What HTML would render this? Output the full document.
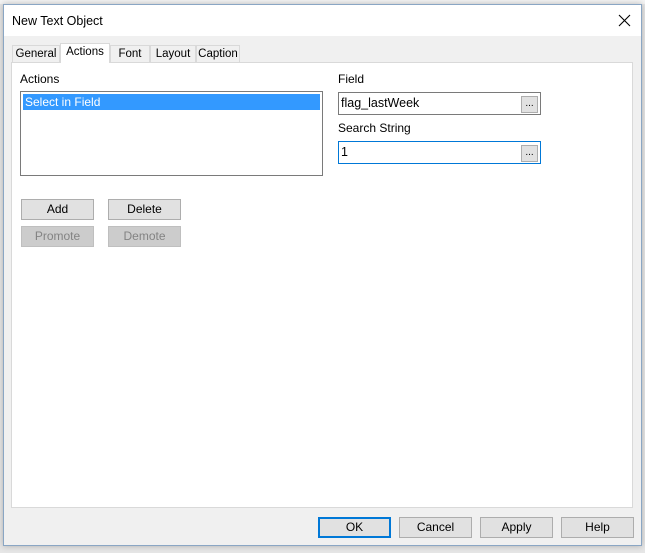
<!DOCTYPE html>
<html><head><style>
*{margin:0;padding:0;box-sizing:border-box}
body{width:645px;height:553px;background:#e6e6e6;font-family:"Liberation Sans",Arial,sans-serif;font-size:12px;color:#000;position:relative;overflow:hidden}
.a{position:absolute}
.win{left:3px;top:4px;width:639px;height:542px;background:#f0f0f0;border:1px solid #8aa6c4;box-shadow:0 0 6px rgba(0,0,0,.25)}
.title{left:0;top:0;width:637px;height:31px;background:#fff}
.tab{top:40px;height:18px;border:1px solid #d9d9d9;border-bottom:none;background:#f0f0f0;text-align:center;line-height:17px;font-size:11.5px}
.panel{left:7px;top:57px;width:622px;height:446px;background:#fff;border:1px solid #d9d9d9}
.btn{width:73px;height:21px;background:#e1e1e1;border:1px solid #adadad;text-align:center;line-height:19px}
.dis{background:#cccccc;border-color:#bfbfbf;color:#838383}
.box{background:#fff;border:1px solid #7a7a7a}
.dots{width:17px;height:17px;background:#e1e1e1;border:1px solid #adadad;font-size:10px;text-align:center;line-height:13px}
</style></head><body>
<div class="a" style="left:0;top:0;width:645px;height:4px;background:#f4f4f4"></div>
<div class="a win">
 <div class="a title"></div>
 <div class="a" style="left:8px;top:9px;font-size:12.5px">New Text Object</div>
 <svg class="a" style="left:614px;top:9px" width="14" height="14"><path d="M1 1L12 12M12 1L1 12" stroke="#000" stroke-width="1.1"/></svg>
 <div class="a tab" style="left:8px;width:48px">General</div>
 <div class="a tab" style="left:56px;top:38px;height:20px;width:50px;background:#fff;z-index:2">Actions</div>
 <div class="a tab" style="left:106px;width:40px">Font</div>
 <div class="a tab" style="left:146px;width:46px">Layout</div>
 <div class="a tab" style="left:192px;width:44px">Caption</div>
 <div class="a panel"></div>
 <div class="a" style="left:16px;top:67px">Actions</div>
 <div class="a box" style="left:16px;top:86px;width:303px;height:85px">
  <div class="a" style="left:2px;top:2px;width:297px;height:16px;background:#3399ff;color:#fff;padding-left:2px;line-height:16px">Select in Field</div>
 </div>
 <div class="a btn" style="left:17px;top:194px">Add</div>
 <div class="a btn" style="left:104px;top:194px">Delete</div>
 <div class="a btn dis" style="left:17px;top:221px">Promote</div>
 <div class="a btn dis" style="left:104px;top:221px">Demote</div>
 <div class="a" style="left:334px;top:67px">Field</div>
 <div class="a box" style="left:334px;top:87px;width:203px;height:23px">
  <div class="a" style="left:2px;top:3px;font-size:12.5px">flag_lastWeek</div>
  <div class="a dots" style="left:182px;top:3px">...</div>
 </div>
 <div class="a" style="left:334px;top:116px">Search String</div>
 <div class="a box" style="left:334px;top:136px;width:203px;height:23px;border:1px solid #0078d7">
  <div class="a" style="left:2px;top:3px;font-size:12.5px">1</div>
  <div class="a dots" style="left:182px;top:3px">...</div>
 </div>
 <div class="a btn" style="left:314px;top:512px;border:2px solid #0078d7;line-height:17px">OK</div>
 <div class="a btn" style="left:395px;top:512px">Cancel</div>
 <div class="a btn" style="left:476px;top:512px">Apply</div>
 <div class="a btn" style="left:557px;top:512px">Help</div>
</div>
</body></html>
